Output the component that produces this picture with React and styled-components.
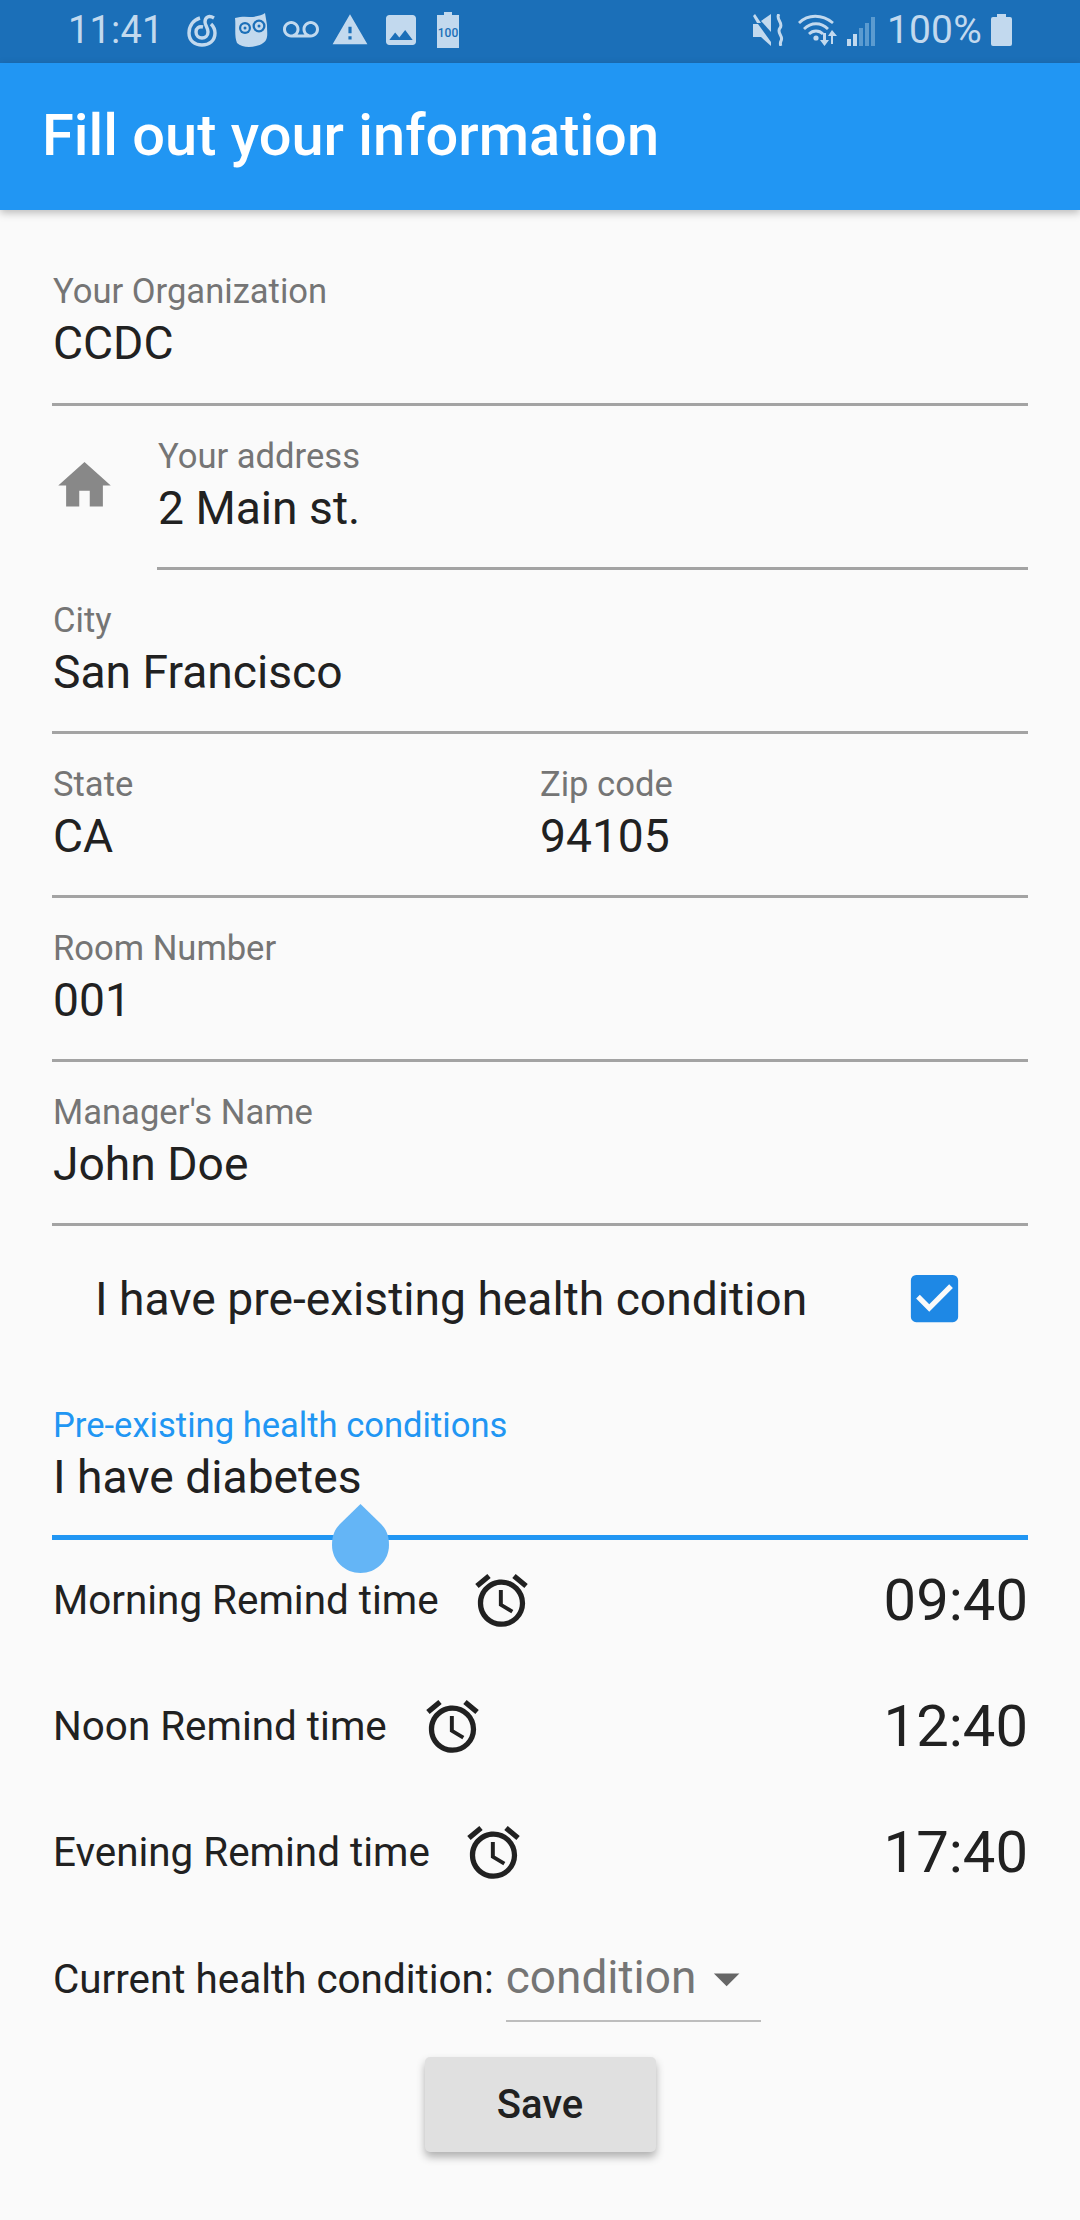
import React from 'react'
import styled, {createGlobalStyle} from 'styled-components'
import {MdHome, MdAccessAlarm, MdCheckBox, MdArrowDropDown, MdWarning, MdImage, MdVoicemail} from 'react-icons/md'

const Global = createGlobalStyle`
  html, body { margin:0; padding:0; background:#fafafa; }
  body { font-family: Roboto, "Noto Sans", sans-serif; }
  * { box-sizing:border-box; }
`

const Page = styled.div`
  width:1080px;
  height:2220px;
  background:#fafafa;
  overflow:hidden;
  color:#212121;
`

const StatusBar = styled.div`
  height:63px;
  background:#1b6fb8;
  color:#c2d9ee;
  display:flex;
  align-items:center;
  justify-content:space-between;
  padding:0 68px 3px 68px;
`

const StatusGroup = styled.div`
  display:flex;
  align-items:center;
`

const StatusText = styled.span`
  font-size:${p => p.$size || 38}px;
  line-height:1;
  margin-right:${p => p.$gap || 0}px;
  letter-spacing:0.2px;
`

const StatusIcon = styled.svg`
  display:block;
  flex:none;
  fill:currentColor;
  margin-right:${p => p.$gap || 0}px;
`

const AppBar = styled.header`
  height:147px;
  background:#2196f3;
  color:#fff;
  display:flex;
  align-items:center;
  padding:0 0 3px 42px;
  font-size:57.750px;
  font-weight:500;
  box-shadow:0 3px 8px rgba(0,0,0,0.25);
  position:relative;
`

const Form = styled.div`
  padding:0 52px;
`

const Field = styled.div`
  height:${p => p.$first ? 196 : 164}px;
  display:flex;
  flex-direction:column;
  border-bottom:3px solid #a3a3a3;
  padding-top:${p => p.$first ? 61 : 30}px;
  padding-left:1px;
`

const Label = styled.label`
  font-size:34.600px;
  line-height:40px;
  color:${p => p.$active ? '#2196f3' : '#757575'};
`

const Value = styled.div`
  font-size:46.200px;
  line-height:52px;
  margin-top:6px;
  color:#212121;
`

const AddressRow = styled.div`
  display:flex;
  align-items:center;
  height:164px;
`

const AddressIcon = styled.div`
  width:105px;
  flex:none;
  color:#888;
  display:flex;
  padding:0 0 5px 1px;
  svg { display:block; }
`

const AddressField = styled(Field)`
  flex:1;
`

const SplitRow = styled(Field)`
  flex-direction:row;
`

const SplitCell = styled.div`
  width:${p => p.$width}px;
  display:flex;
  flex-direction:column;
`

const CheckRow = styled.div`
  height:145px;
  display:flex;
  align-items:center;
  justify-content:space-between;
  padding:0 62px 0 43px;
  font-size:46.200px;
  color:#212121;
  svg { display:block; color:#1e88e5; }
`

const HealthField = styled.div`
  height:169px;
  border-bottom:5px solid #2196f3;
  position:relative;
  padding:34px 0 0 1px;
  display:flex;
  flex-direction:column;
`

const Drop = styled.svg`
  position:absolute;
  left:280px;
  top:133px;
  display:block;
`

const RemindList = styled.div`
  display:flex;
  flex-direction:column;
  margin-top:-3px;
`

const RemindRow = styled.div`
  height:126px;
  display:flex;
  align-items:center;
  justify-content:space-between;
`

const RemindLabel = styled.div`
  display:flex;
  align-items:center;
  gap:${p => p.$gap}px;
  font-size:40.400px;
  padding-left:1px;
  svg { display:block; }
`

const RemindTime = styled.div`
  font-size:58px;
  color:#212121;
`

const ConditionRow = styled.div`
  display:flex;
  align-items:flex-start;
  gap:12px;
  margin-top:32px;
  padding-left:1px;
`

const ConditionLabel = styled.div`
  font-size:40.400px;
  line-height:60px;
  padding-top:3px;
`

const Select = styled.div`
  width:255px;
  height:75px;
  border-bottom:2px solid #bdbdbd;
  display:flex;
  align-items:flex-start;
  justify-content:space-between;
  font-size:46px;
  line-height:60px;
  color:#757575;
  svg { display:block; color:#666; margin:0 3px 0 0; }
`

const SaveWrap = styled.div`
  display:flex;
  justify-content:center;
  margin-top:35px;
`

const SaveButton = styled.button`
  width:231px;
  height:95px;
  border:none;
  border-radius:5px;
  background:#e0e0e0;
  color:#212121;
  font-family:inherit;
  font-size:40px;
  font-weight:500;
  box-shadow:0 5px 8px rgba(0,0,0,0.3);
`

function Spiral() {
  return (
    <StatusIcon viewBox="0 0 30 33" width="30" height="33" $gap={17}>
      <g fill="none" stroke="currentColor" strokeWidth="3.400">
        <path d="M13 4 C6 6 2 12 2 19 C2 27 8 31 15 31 C22 31 28 27 28 19 C28 15 26 12 24 10" />
        <path d="M27 4 C22 1 18 3 18 8 C18 11 21 14 21 18 C21 22 18 24 15 24 C12 24 9 22 9 18 C9 14 12 12 16 13" />
      </g>
    </StatusIcon>
  )
}

function Owl() {
  return (
    <StatusIcon viewBox="0 0 34 36" width="34" height="36" $gap={15}>
      <path d="M1 6 C8 4 14 5 19 5 C24 4 29 3 31 1 L33 13 C33 20 34 24 32 28 C28 35 10 38 3 31 C0 24 2 14 1 6 Z" />
      <circle cx="11" cy="16" r="6" fill="#1b6fb8" />
      <circle cx="25" cy="14" r="6.500" fill="#1b6fb8" />
      <circle cx="11" cy="16" r="3.800" />
      <circle cx="25" cy="14" r="4.200" />
      <circle cx="11" cy="16" r="1.500" fill="#1b6fb8" />
      <circle cx="25" cy="14" r="1.500" fill="#1b6fb8" />
    </StatusIcon>
  )
}

function BatteryHundred() {
  return (
    <StatusIcon viewBox="0 0 22 36" width="22" height="36">
      <path d="M7 0h8v3h7v33H0V3h7z" />
      <text x="11" y="25" fontSize="12" fontWeight="500" textAnchor="middle" fill="#1b6fb8" fontFamily="Roboto">100</text>
    </StatusIcon>
  )
}

function Mute() {
  return (
    <StatusIcon viewBox="0 0 33 32" width="33" height="32" $gap={12}>
      <path d="M0 10h5L18 28v4L8 23H0z" />
      <path d="M8 7l10-7v18z" />
      <path d="M0 2L2 0 8 9H4z" />
      <path d="M26 0 C22 5 31 9 27 14 C23 19 31 22 28 27 C27 29 27 30 28 32" fill="none" stroke="currentColor" strokeWidth="3" />
    </StatusIcon>
  )
}

function Wifi() {
  return (
    <StatusIcon viewBox="0 0 41 32" width="41" height="32" $gap={8}>
      <path d="M1 9 C10 0 24 0 35 9" fill="none" stroke="currentColor" strokeWidth="2.800" />
      <path d="M6 15 C13 8 23 8 30 15" fill="none" stroke="currentColor" strokeWidth="2.800" />
      <path d="M11 20 C15 16 21 16 25 20" fill="none" stroke="currentColor" strokeWidth="2.800" />
      <circle cx="18" cy="24" r="2.600" />
      <path d="M25 19h3v7h3l-4.500 6-4.500-6h3z" />
      <path d="M35 30h-2v-8h-3l4-6 5 6h-4z" />
    </StatusIcon>
  )
}

const signalBars = [
  {x:0, h:7, fill:'#c2d9ee'},
  {x:6, h:12, fill:'#c2d9ee'},
  {x:12, h:18, fill:'#5b9bd0'},
  {x:18, h:23, fill:'#5b9bd0'},
  {x:24, h:29, fill:'#5b9bd0'},
]

function Signal() {
  return (
    <StatusIcon viewBox="0 0 29 32" width="29" height="32" $gap={11}>
      {signalBars.map(b => <rect key={b.x} x={b.x} y={32 - b.h} width="4" height={b.h} fill={b.fill} />)}
    </StatusIcon>
  )
}

function Battery() {
  return (
    <StatusIcon viewBox="0 0 21 32" width="21" height="32">
      <path d="M6 0h9v3h4a2 2 0 0 1 2 2v25a2 2 0 0 1-2 2H2a2 2 0 0 1-2-2V5a2 2 0 0 1 2-2h4z" />
    </StatusIcon>
  )
}

function HealthDrop() {
  return (
    <Drop viewBox="0 0 57 70" width="57" height="70">
      <path d="M28.500 0 L49 20 C54 25 57 31 57 41 C57 57 44 69 28.500 69 C13 69 0 57 0 41 C0 31 3 25 8 20 Z" fill="#64b5f6" />
    </Drop>
  )
}

const reminders = [
  {label:'Morning Remind time', time:'09:40', gap:31},
  {label:'Noon Remind time', time:'12:40', gap:34},
  {label:'Evening Remind time', time:'17:40', gap:32},
]

function App() {
  return (
    <Page>
      <Global />
      <StatusBar>
        <StatusGroup>
          <StatusText $gap={23}>11:41</StatusText>
          <Spiral />
          <Owl />
          <StatusIcon as={MdVoicemail} size={36} $gap={12} />
          <StatusIcon as={MdWarning} size={38} $gap={12} />
          <StatusIcon as={MdImage} size={40} $gap={16} />
          <BatteryHundred />
        </StatusGroup>
        <StatusGroup>
          <Mute />
          <Wifi />
          <Signal />
          <StatusText $size={39} $gap={9}>100%</StatusText>
          <Battery />
        </StatusGroup>
      </StatusBar>
      <AppBar>Fill out your information</AppBar>
      <Form>
        <Field $first>
          <Label>Your Organization</Label>
          <Value>CCDC</Value>
        </Field>
        <AddressRow>
          <AddressIcon><MdHome size={63} /></AddressIcon>
          <AddressField>
            <Label>Your address</Label>
            <Value>2 Main st.</Value>
          </AddressField>
        </AddressRow>
        <Field>
          <Label>City</Label>
          <Value>San Francisco</Value>
        </Field>
        <SplitRow>
          <SplitCell $width={487}>
            <Label>State</Label>
            <Value>CA</Value>
          </SplitCell>
          <SplitCell $width={487}>
            <Label>Zip code</Label>
            <Value>94105</Value>
          </SplitCell>
        </SplitRow>
        <Field>
          <Label>Room Number</Label>
          <Value>001</Value>
        </Field>
        <Field>
          <Label>Manager's Name</Label>
          <Value>John Doe</Value>
        </Field>
        <CheckRow>
          <span>I have pre-existing health condition</span>
          <MdCheckBox size={63} />
        </CheckRow>
        <HealthField>
          <Label $active>Pre-existing health conditions</Label>
          <Value>I have diabetes</Value>
          <HealthDrop />
        </HealthField>
        <RemindList>
          {reminders.map(r => (
            <RemindRow key={r.label}>
              <RemindLabel $gap={r.gap}>
                {r.label}
                <MdAccessAlarm size={63} />
              </RemindLabel>
              <RemindTime>{r.time}</RemindTime>
            </RemindRow>
          ))}
        </RemindList>
        <ConditionRow>
          <ConditionLabel>Current health condition:</ConditionLabel>
          <Select>
            condition
            <MdArrowDropDown size={63} />
          </Select>
        </ConditionRow>
        <SaveWrap>
          <SaveButton>Save</SaveButton>
        </SaveWrap>
      </Form>
    </Page>
  )
}

export default App
